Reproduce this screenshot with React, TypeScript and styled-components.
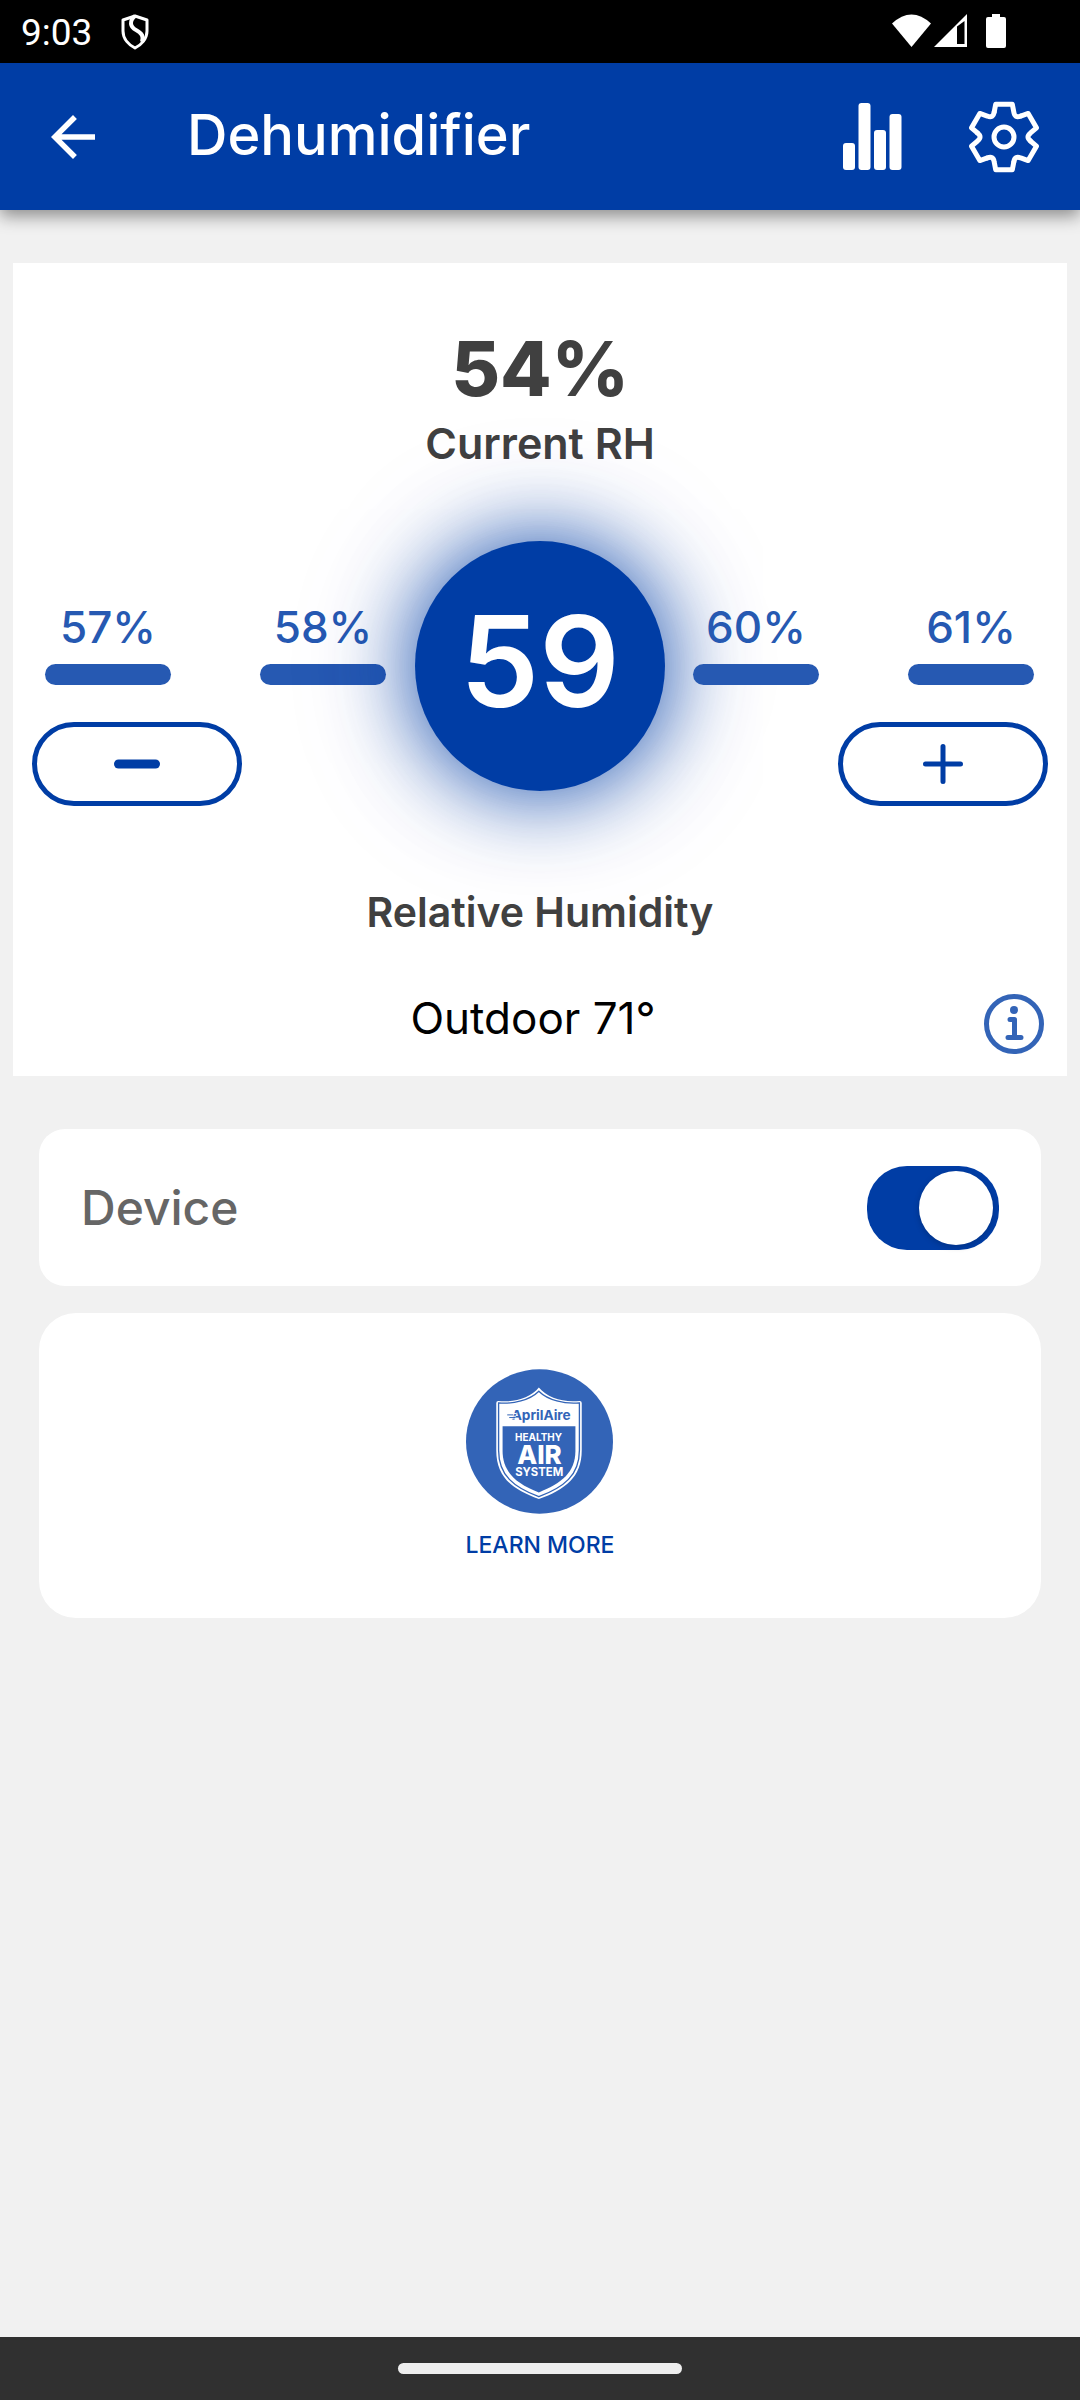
import React, { useState } from "react";
import styled, { createGlobalStyle } from "styled-components";

const BLUE = "#003da5";
const BLUE_MUTED = "#2659b2";
const BLUE_SOFT = "#3364b7";
const INK = "#404040";

const GlobalStyle = createGlobalStyle`
  *, *::before, *::after { box-sizing: border-box; }
  body {
    margin: 0;
    background: #f1f1f1;
    font-family: Inter, "Open Sans", sans-serif;
  }
  h1, h2, p { margin: 0; }
  svg { display: block; }
`;

const Screen = styled.div`
  display: flex;
  flex-direction: column;
  min-height: 100vh;
`;

const StatusBar = styled.div`
  display: flex;
  align-items: center;
  height: 63px;
  padding: 0 74px 0 21px;
  background: #000;
  color: #fff;
`;

const Clock = styled.time`
  margin-right: 28px;
  padding-top: 2px;
  font: 400 37px/61px Roboto, sans-serif;
`;

const StatusIcons = styled.div`
  display: flex;
  align-items: center;
  margin-left: auto;
`;

const Header = styled.header`
  position: relative;
  display: flex;
  align-items: center;
  height: 147px;
  padding: 0 41px 0 40px;
  background: ${BLUE};
  color: #fff;
  box-shadow: 0 6px 16px rgba(0, 0, 0, 0.42);
`;

const Title = styled.h1`
  flex: 1;
  margin-left: 81px;
  padding-bottom: 4px;
  font-size: 56px;
  line-height: 64px;
  font-weight: 500;
`;

const IconButton = styled.button`
  display: grid;
  place-items: center;
  padding: 0;
  border: 0;
  background: none;
  color: inherit;
`;

const HeaderActions = styled.div`
  display: flex;
  align-items: center;
  gap: 66px;
`;

const Main = styled.main`
  flex: 1;
`;

const Panel = styled.section`
  display: flex;
  flex-direction: column;
  margin: 53px 13px 0;
  padding: 58px 19px 22px;
  background: #fff;
  text-align: center;
`;

const Reading = styled.p`
  color: ${INK};
  font-size: 75px;
  line-height: 96px;
  font-weight: 800;
`;

const Caption = styled.h2<{ $size: number }>`
  color: ${INK};
  font-size: ${(p) => p.$size}px;
  line-height: 52px;
  font-weight: 600;
`;

const DialRow = styled.div`
  display: grid;
  grid-template-columns: 1fr 250px 1fr;
  margin: 72px 0 80px;
`;

const Side = styled.div<{ $end?: boolean }>`
  display: flex;
  flex-direction: column;
  align-items: ${(p) => (p.$end ? "flex-end" : "flex-start")};
  gap: 37px;
  padding-top: 58px;
`;

const Ticks = styled.div<{ $end?: boolean }>`
  display: flex;
  align-self: stretch;
  justify-content: space-between;
  padding: ${(p) => (p.$end ? "0 14px 0 28px" : "0 29px 0 13px")};
`;

const Tick = styled.div`
  width: 126px;
  color: ${BLUE_MUTED};
  font-size: 44px;
  line-height: 56px;
  font-weight: 500;

  &::after {
    content: "";
    display: block;
    height: 21px;
    margin-top: 9px;
    border-radius: 11px;
    background: ${BLUE_MUTED};
  }
`;

const Dial = styled.output`
  display: grid;
  place-items: center;
  height: 250px;
  padding-bottom: 10px;
  border-radius: 50%;
  background: ${BLUE};
  color: #fff;
  font-size: 126px;
  line-height: 140px;
  font-weight: 600;
  box-shadow: 0 0 80px 4px rgba(0, 61, 165, 0.8), 0 0 140px rgba(0, 61, 165, 0.2);
`;

const StepButton = styled.button`
  display: grid;
  place-items: center;
  width: 210px;
  height: 84px;
  padding: 0;
  border: 5px solid ${BLUE};
  border-radius: 42px;
  background: none;
  color: ${BLUE};
`;

const OutdoorRow = styled.div`
  display: grid;
  grid-template-columns: 1fr auto 1fr;
  align-items: start;
  margin-top: 56px;
`;

const Outdoor = styled.p`
  grid-column: 2;
  padding-right: 14px;
  font-size: 44px;
  line-height: 48px;
`;

const InfoButton = styled(IconButton)`
  justify-self: end;
  margin-right: 4px;
  color: ${BLUE_SOFT};
`;

const Card = styled.section<{ $radius: number }>`
  margin: 0 39px;
  border-radius: ${(p) => p.$radius}px;
  background: #fff;
`;

const DeviceCard = styled(Card)`
  display: flex;
  align-items: center;
  justify-content: space-between;
  height: 157px;
  margin-top: 53px;
  padding: 0 42px;
`;

const DeviceLabel = styled.label`
  color: #666;
  font-size: 48px;
  line-height: 56px;
  font-weight: 500;
`;

const Toggle = styled.input`
  appearance: none;
  display: flex;
  width: 132px;
  height: 84px;
  margin: 0;
  padding: 5px 6px;
  border-radius: 40px;
  background: #a8a8a8;

  &::before {
    content: "";
    width: 74px;
    height: 74px;
    border-radius: 50%;
    background: #fff;
    box-shadow: 0 2px 6px rgba(0, 0, 0, 0.2);
  }

  &:checked {
    justify-content: flex-end;
    background: ${BLUE};
  }
`;

const LearnCard = styled(Card)`
  display: flex;
  justify-content: center;
  margin-top: 27px;
  padding: 56px 0 57px;
`;

const LearnLink = styled.a`
  display: flex;
  flex-direction: column;
  align-items: center;
  gap: 15px;
  color: ${BLUE};
  font-size: 23px;
  line-height: 32px;
  font-weight: 500;
  text-decoration: none;
`;

const NavBar = styled.footer`
  display: grid;
  place-items: center;
  height: 63px;
  background: #303030;
`;

const NavHandle = styled.div`
  width: 284px;
  height: 11px;
  border-radius: 6px;
  background: #eee;
`;

const ShieldIcon = () => (
  <svg width="30" height="36" viewBox="0 0 28 36" fill="none" stroke="#fff" strokeWidth="3" strokeLinejoin="round">
    <path d="M14 2 26 6V17C26 25 20 31 14 34 8 31 2 25 2 17V6Z" />
    <path d="M14 2C8 7 9 13 15 16 21 19 23 23 21 28" strokeWidth="4" />
  </svg>
);

const SignalIcons = () => (
  <svg width="114" height="35" viewBox="0 0 114 35" fill="#fff">
    <path d="M0 9.500Q19.500 -8.500 39 9.500L19.500 33Z" />
    <path d="M42 33 75 0V33Z" />
    <path d="M65 12.500 72.500 7V30H65Z" fill="#000" />
    <path d="M100 0h8v3h4a2 2 0 0 1 2 2v27a2 2 0 0 1-2 2H96a2 2 0 0 1-2-2V5a2 2 0 0 1 2-2h4Z" />
  </svg>
);

const BackIcon = () => (
  <svg width="66" height="66" viewBox="0 0 24 24" fill="currentColor">
    <path d="M20 11H7.830l5.590-5.590L12 4l-8 8 8 8 1.410-1.410L7.830 13H20v-2z" />
  </svg>
);

const ChartIcon = () => (
  <svg width="60" height="68" viewBox="0 0 60 68" fill="currentColor">
    <rect x="0" y="40" width="12" height="27" rx="3" />
    <rect x="15.500" y="0" width="12" height="67" rx="3" />
    <rect x="31" y="27" width="12" height="40" rx="3" />
    <rect x="46.500" y="11" width="12" height="56" rx="3" />
  </svg>
);

const tooth = "M-9.800-25L-8.300-32.700H8.300L9.800-25Q10.700-18.500 16.700-21";

const GearIcon = () => (
  <svg width="70" height="72" viewBox="-35 -36 70 72" fill="none" stroke="currentColor" strokeWidth="5" strokeLinejoin="round" strokeLinecap="round">
    {[0, 60, 120, 180, 240, 300].map((a) => (
      <path key={a} d={tooth} transform={`rotate(${a})`} />
    ))}
    <circle r="10" />
  </svg>
);

const MinusIcon = () => (
  <svg width="48" height="48" viewBox="0 0 48 48" stroke="currentColor" strokeWidth="9" strokeLinecap="round">
    <path d="M5.500 24h37" />
  </svg>
);

const PlusIcon = () => (
  <svg width="40" height="40" viewBox="0 0 40 40" stroke="currentColor" strokeWidth="5" strokeLinecap="round">
    <path d="M2.500 20h35M20 2.500v35" />
  </svg>
);

const InfoIcon = () => (
  <svg width="60" height="60" viewBox="0 0 60 60" fill="none" stroke="currentColor" strokeWidth="5" strokeLinecap="round" strokeLinejoin="round">
    <circle cx="30" cy="30" r="27.500" />
    <circle cx="30" cy="16" r="4" fill="currentColor" stroke="none" />
    <path d="M26 25.500h4.500v18M24 43.500h13" />
  </svg>
);

const HealthyAirBadge = () => (
  <svg width="147" height="145" viewBox="80 57 442 434" fontFamily="Inter, sans-serif" fontWeight="800" textAnchor="middle">
    <ellipse cx="301" cy="274" rx="221" ry="217" fill={BLUE_SOFT} />
    <path
      d="M299 112C324 143 374 158 422 152Q428 152 428 158V300C428 382 378 418 299 447 220 418 171 382 171 300V158Q171 152 177 152C224 158 274 143 299 112Z"
      fill="#fff"
    />
    <path
      d="M299 123C326 150 376 162 421 158V300C421 376 374 412 299 440 224 412 178 376 178 300V158C222 162 272 150 299 123Z"
      fill="#fff"
      stroke={BLUE_SOFT}
      strokeWidth="4"
    />
    <path d="M190 228H409V302C409 366 368 400 299 427 230 400 190 366 190 302Z" fill={BLUE_SOFT} />
    <text x="306" y="209" fontSize="41" fontWeight="700" fill={BLUE_SOFT}>AprilAire</text>
    <path d="M206 198h24M212 190h20M218 206h14" stroke="#fff" strokeWidth="3" />
    <path d="M204 194h18M210 202h14" stroke={BLUE_SOFT} strokeWidth="3" />
    <g fill="#fff">
      <text x="298" y="272" fontSize="30" fontWeight="700">HEALTHY</text>
      <text x="301" y="341" fontSize="78">AIR</text>
      <text x="300" y="378" fontSize="34" fontWeight="700">SYSTEM</text>
    </g>
  </svg>
);

export default function App() {
  const [target, setTarget] = useState(59);
  const [deviceOn, setDeviceOn] = useState(true);

  return (
    <>
      <GlobalStyle />
      <Screen>
        <StatusBar>
          <Clock>9:03</Clock>
          <ShieldIcon />
          <StatusIcons>
            <SignalIcons />
          </StatusIcons>
        </StatusBar>

        <Header>
          <IconButton type="button" aria-label="Back">
            <BackIcon />
          </IconButton>
          <Title>Dehumidifier</Title>
          <HeaderActions>
            <IconButton type="button" aria-label="History">
              <ChartIcon />
            </IconButton>
            <IconButton type="button" aria-label="Settings">
              <GearIcon />
            </IconButton>
          </HeaderActions>
        </Header>

        <Main>
          <Panel>
            <Reading>54%</Reading>
            <Caption $size={43}>Current RH</Caption>
            <DialRow>
              <Side>
                <Ticks>
                  <Tick>{target - 2}%</Tick>
                  <Tick>{target - 1}%</Tick>
                </Ticks>
                <StepButton type="button" aria-label="Decrease" onClick={() => setTarget(target - 1)}>
                  <MinusIcon />
                </StepButton>
              </Side>
              <Dial>{target}</Dial>
              <Side $end>
                <Ticks $end>
                  <Tick>{target + 1}%</Tick>
                  <Tick>{target + 2}%</Tick>
                </Ticks>
                <StepButton type="button" aria-label="Increase" onClick={() => setTarget(target + 1)}>
                  <PlusIcon />
                </StepButton>
              </Side>
            </DialRow>
            <Caption $size={41}>Relative Humidity</Caption>
            <OutdoorRow>
              <Outdoor>Outdoor 71°</Outdoor>
              <InfoButton type="button" aria-label="Information">
                <InfoIcon />
              </InfoButton>
            </OutdoorRow>
          </Panel>

          <DeviceCard $radius={26}>
            <DeviceLabel htmlFor="device">Device</DeviceLabel>
            <Toggle
              id="device"
              type="checkbox"
              role="switch"
              checked={deviceOn}
              onChange={(e) => setDeviceOn(e.target.checked)}
            />
          </DeviceCard>

          <LearnCard $radius={37}>
            <LearnLink href="#learn-more">
              <HealthyAirBadge />
              LEARN MORE
            </LearnLink>
          </LearnCard>
        </Main>

        <NavBar>
          <NavHandle />
        </NavBar>
      </Screen>
    </>
  );
}
